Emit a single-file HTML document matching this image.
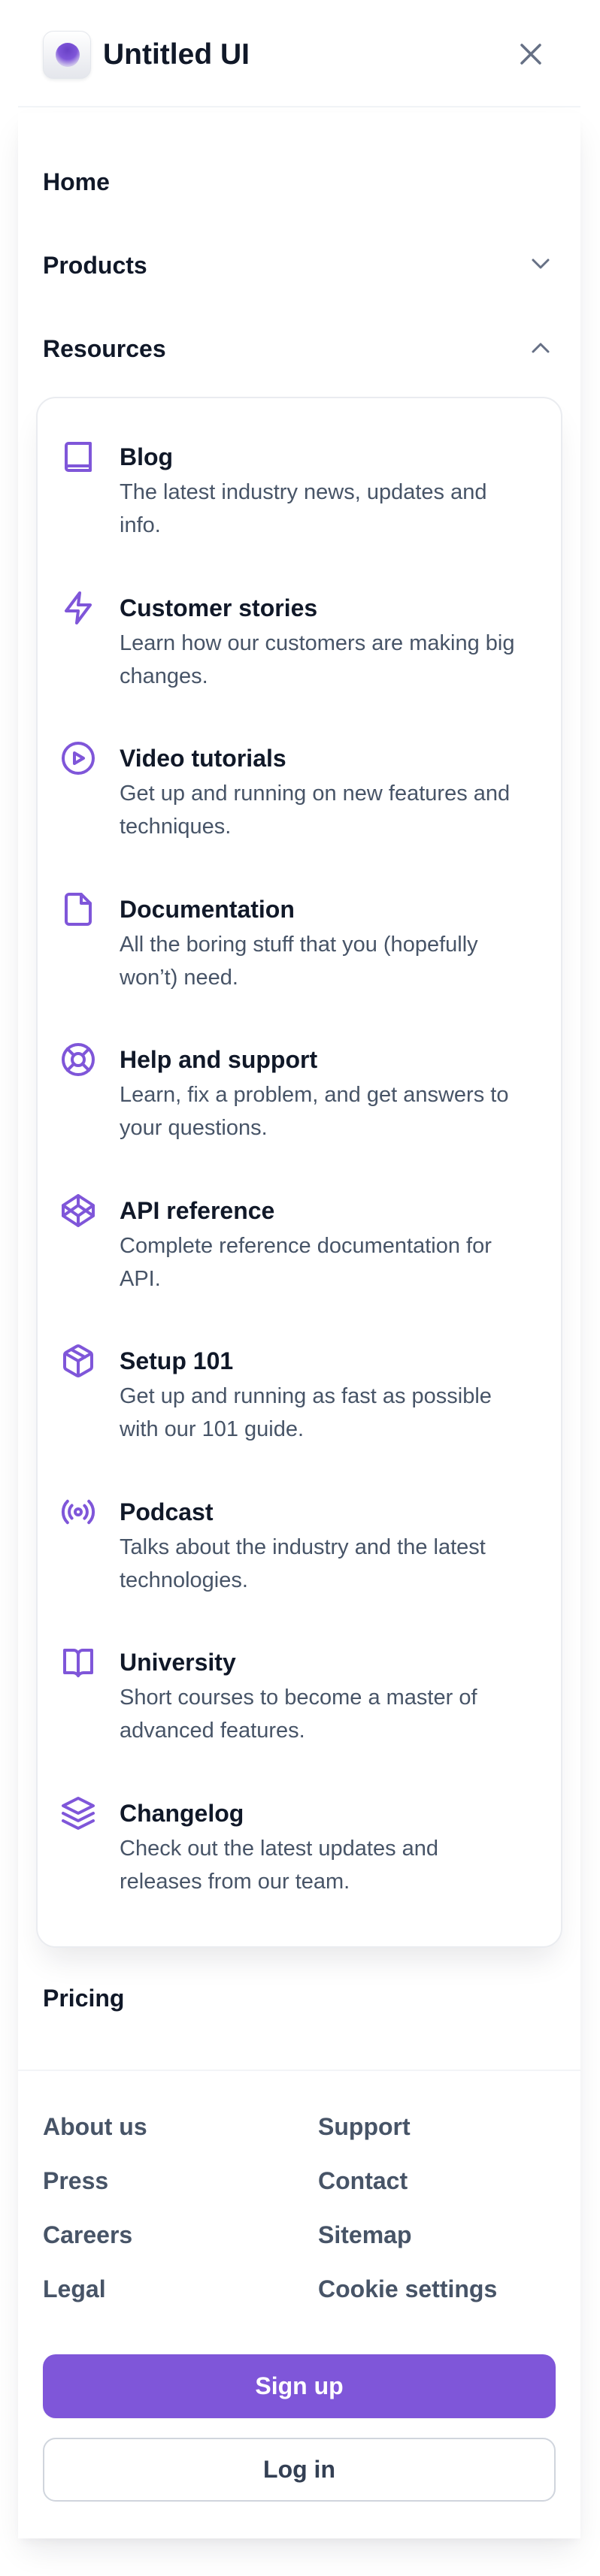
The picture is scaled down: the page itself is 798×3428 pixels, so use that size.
<!DOCTYPE html>
<html><head><meta charset="utf-8"><style>
*{margin:0;padding:0;box-sizing:border-box}
body{width:798px;height:3428px;background:#fff;font-family:"Liberation Sans",sans-serif;position:relative;overflow:hidden}
.a{position:absolute}
.panel{left:24px;top:150px;width:748px;height:3228px;background:#fff;box-shadow:0 20px 40px -8px rgba(16,24,40,.10),0 8px 12px -4px rgba(16,24,40,.04)}
.nav{left:57px;font-size:32px;font-weight:bold;color:#101828;line-height:40px}
.card{left:48px;top:528px;width:700px;height:2064px;border:2px solid #eaecf0;border-radius:26px;background:#fff;box-shadow:0 24px 40px -10px rgba(16,24,40,.10)}
.it{left:159px}
.it .t{font-size:32px;font-weight:bold;color:#101828;line-height:40px}
.it .d{font-size:29px;color:#475467;line-height:43.6px;margin-top:6px}
.ic{left:80px;width:48px;height:48px}
.ic svg{width:48px;height:48px;fill:none;stroke:#7f56d9;stroke-width:2;stroke-linecap:round;stroke-linejoin:round}
.fl{font-size:32px;font-weight:bold;color:#475467;line-height:40px}
</style></head><body>
<div class="a" style="left:57px;top:41px;width:64px;height:64px;border-radius:14px;background:linear-gradient(#fff,#e4e6ec);border:1px solid #e4e7ec;box-shadow:0 2px 4px rgba(16,24,40,.08)">
 <div class="a" style="left:16px;top:15px;width:32px;height:32px;border-radius:50%;background:radial-gradient(circle at 50% 30%,#6941c6 0,#7f56d9 45%,rgba(127,86,217,.3) 75%,rgba(127,86,217,0) 100%)"></div>
</div>
<div class="a" style="left:137px;top:49px;font-size:39px;font-weight:bold;color:#101828;line-height:48px">Untitled UI</div>
<svg class="a" style="left:691px;top:57px" width="30" height="30" viewBox="0 0 30 30"><path d="M3 3L27 27M27 3L3 27" stroke="#667085" stroke-width="3.5" stroke-linecap="round"/></svg>
<div class="a" style="left:24px;top:141px;width:748px;height:2px;background:#f2f4f7"></div>
<div class="a panel"></div>
<div class="a nav" style="top:222px">Home</div>
<div class="a nav" style="top:333px">Products</div>
<svg class="a" style="left:706px;top:342px" width="26" height="18" viewBox="0 0 26 18"><path d="M3 4l10 10 10-10" fill="none" stroke="#667085" stroke-width="3" stroke-linecap="round" stroke-linejoin="round"/></svg>
<div class="a nav" style="top:444px">Resources</div>
<svg class="a" style="left:706px;top:454px" width="26" height="18" viewBox="0 0 26 18"><path d="M3 14l10-10 10 10" fill="none" stroke="#667085" stroke-width="3" stroke-linecap="round" stroke-linejoin="round"/></svg>
<div class="a card"></div>

<div class="a ic" style="top:584px"><svg viewBox="0 0 24 24"><path d="M4 19.5V4.5A1.5 1.5 0 0 1 5.5 3H20v18H5.5A1.5 1.5 0 0 1 4 19.5zM4 19.5A1.5 1.5 0 0 1 5.5 18H20"/></svg></div>
<div class="a it" style="top:588px"><div class="t">Blog</div><div class="d">The latest industry news, updates and<br>info.</div></div>

<div class="a ic" style="top:785px"><svg viewBox="0 0 24 24"><path d="M13 2L4 14h8l-1 8 9-12h-8l1-8z"/></svg></div>
<div class="a it" style="top:789px"><div class="t">Customer stories</div><div class="d">Learn how our customers are making big<br>changes.</div></div>

<div class="a ic" style="top:985px"><svg viewBox="0 0 24 24"><circle cx="12" cy="12" r="10"/><path d="M9.5 8.5v7l6-3.5-6-3.5z"/></svg></div>
<div class="a it" style="top:989px"><div class="t">Video tutorials</div><div class="d">Get up and running on new features and<br>techniques.</div></div>

<div class="a ic" style="top:1186px"><svg viewBox="0 0 24 24"><path d="M14 2H6a2 2 0 0 0-2 2v16a2 2 0 0 0 2 2h12a2 2 0 0 0 2-2V8l-6-6zM14 2v6h6"/></svg></div>
<div class="a it" style="top:1190px"><div class="t">Documentation</div><div class="d">All the boring stuff that you (hopefully<br>won’t) need.</div></div>

<div class="a ic" style="top:1386px"><svg viewBox="0 0 24 24"><circle cx="12" cy="12" r="10"/><circle cx="12" cy="12" r="4"/><path d="M4.9 4.9l4.3 4.3M14.8 14.8l4.3 4.3M14.8 9.2l4.3-4.3M4.9 19.1l4.3-4.3"/></svg></div>
<div class="a it" style="top:1390px"><div class="t">Help and support</div><div class="d">Learn, fix a problem, and get answers to<br>your questions.</div></div>

<div class="a ic" style="top:1587px"><svg viewBox="0 0 24 24"><path d="M12 2l10 6.5v7L12 22 2 15.5v-7L12 2zM12 22v-6.5M22 8.5l-10 7-10-7M2 15.5l10-7 10 7M12 2v6.5"/></svg></div>
<div class="a it" style="top:1591px"><div class="t">API reference</div><div class="d">Complete reference documentation for<br>API.</div></div>

<div class="a ic" style="top:1787px"><svg viewBox="0 0 24 24"><path d="M21 16V8a2 2 0 0 0-1-1.7l-7-4a2 2 0 0 0-2 0l-7 4A2 2 0 0 0 3 8v8a2 2 0 0 0 1 1.7l7 4a2 2 0 0 0 2 0l7-4a2 2 0 0 0 1-1.7zM3.3 7L12 12l8.7-5M12 22V12M7.5 4.5l9 5"/></svg></div>
<div class="a it" style="top:1791px"><div class="t">Setup 101</div><div class="d">Get up and running as fast as possible<br>with our 101 guide.</div></div>

<div class="a ic" style="top:1988px"><svg viewBox="0 0 24 24"><circle cx="12" cy="12" r="2"/><path d="M16.2 7.8a6 6 0 0 1 0 8.5M7.8 16.2a6 6 0 0 1 0-8.5M19.1 4.9a10 10 0 0 1 0 14.2M4.9 19.1a10 10 0 0 1 0-14.2"/></svg></div>
<div class="a it" style="top:1992px"><div class="t">Podcast</div><div class="d">Talks about the industry and the latest<br>technologies.</div></div>

<div class="a ic" style="top:2188px"><svg viewBox="0 0 24 24"><path d="M12 21l-.1-.15A4 4 0 0 0 8.6 19H3V4h6a3 3 0 0 1 3 3M12 21l.1-.15A4 4 0 0 1 15.4 19H21V4h-6a3 3 0 0 0-3 3M12 21V7"/></svg></div>
<div class="a it" style="top:2192px"><div class="t">University</div><div class="d">Short courses to become a master of<br>advanced features.</div></div>

<div class="a ic" style="top:2389px"><svg viewBox="0 0 24 24"><path d="M2 12l10 5 10-5M2 17l10 5 10-5M12 2L2 7l10 5 10-5-10-5z"/></svg></div>
<div class="a it" style="top:2393px"><div class="t">Changelog</div><div class="d">Check out the latest updates and<br>releases from our team.</div></div>

<div class="a nav" style="top:2639px">Pricing</div>
<div class="a" style="left:24px;top:2754px;width:748px;height:2px;background:#f2f4f7"></div>

<div class="a fl" style="left:57px;top:2810px">About us</div>
<div class="a fl" style="left:423px;top:2810px">Support</div>
<div class="a fl" style="left:57px;top:2882px">Press</div>
<div class="a fl" style="left:423px;top:2882px">Contact</div>
<div class="a fl" style="left:57px;top:2954px">Careers</div>
<div class="a fl" style="left:423px;top:2954px">Sitemap</div>
<div class="a fl" style="left:57px;top:3026px">Legal</div>
<div class="a fl" style="left:423px;top:3026px">Cookie settings</div>

<div class="a" style="left:57px;top:3133px;width:682px;height:85px;border-radius:17px;background:#7f56d9;color:#fff;font-size:32px;font-weight:bold;text-align:center;line-height:85px;box-shadow:0 1px 2px rgba(16,24,40,.05)">Sign up</div>
<div class="a" style="left:57px;top:3244px;width:682px;height:85px;border-radius:17px;border:2px solid #d0d5dd;background:#fff;color:#344054;font-size:32px;font-weight:bold;text-align:center;line-height:81px">Log in</div>
</body></html>
